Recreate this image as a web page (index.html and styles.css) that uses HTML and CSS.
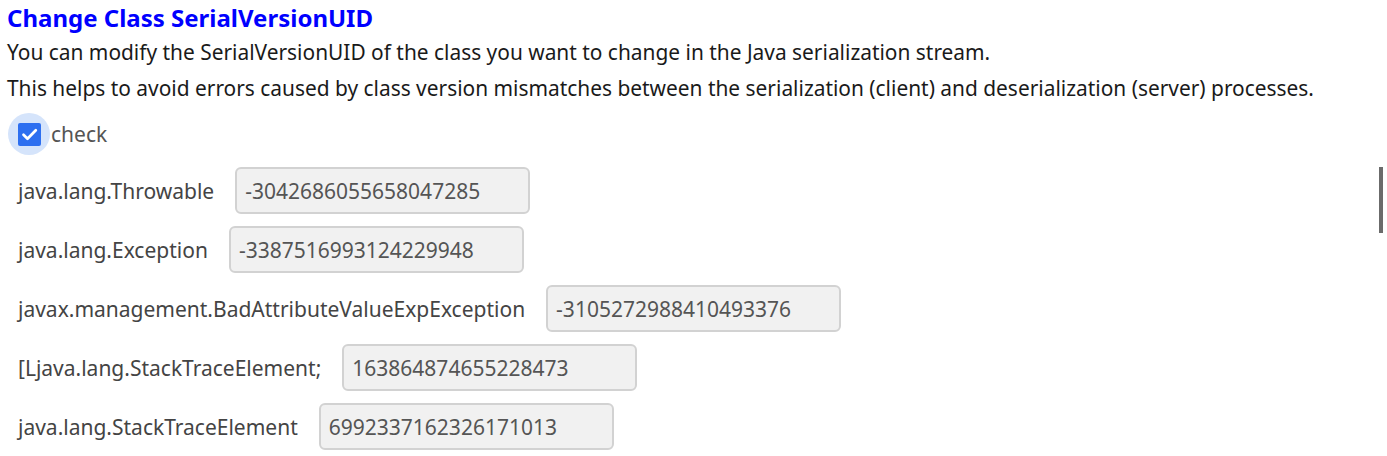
FILE: index.html
```html
<!DOCTYPE html>
<html>
<head>
<meta charset="utf-8">
<link rel="stylesheet" href="styles.css">
</head>
<body>
<div class="page">
  <h2 class="title">Change Class SerialVersionUID</h2>
  <p class="desc">You can modify the SerialVersionUID of the class you want to change in the Java serialization stream.</p>
  <p class="desc">This helps to avoid errors caused by class version mismatches between the serialization (client) and deserialization (server) processes.</p>
  <label class="check">
    <span class="ring"><span class="box"><svg viewBox="0 0 23 23" width="23" height="23"><path d="M5.5 11.8l4 4L17.8 7.2" fill="none" stroke="#fff" stroke-width="2.7" stroke-linecap="round" stroke-linejoin="round"/></svg></span></span>
    <span class="check-label">check</span>
  </label>
  <div class="rows">
    <div class="row"><span class="name">java.lang.Throwable</span><span class="field">-3042686055658047285</span></div>
    <div class="row"><span class="name">java.lang.Exception</span><span class="field">-3387516993124229948</span></div>
    <div class="row"><span class="name">javax.management.BadAttributeValueExpException</span><span class="field">-3105272988410493376</span></div>
    <div class="row"><span class="name">[Ljava.lang.StackTraceElement;</span><span class="field">163864874655228473</span></div>
    <div class="row"><span class="name">java.lang.StackTraceElement</span><span class="field">6992337162326171013</span></div>
  </div>
  <div class="scroll-thumb"></div>
</div>
</body>
</html>
```
FILE: styles.css
```css
html, body {
  margin: 0;
  padding: 0;
  background: #fff;
}
body {
  font-family: "Noto Sans", "Open Sans", sans-serif;
  overflow: hidden;
}
.page {
  padding: 0 7px;
}
.title {
  margin: 0;
  padding-top: 2px;
  font-size: 24px;
  line-height: 32px;
  font-weight: 700;
  color: #0000ff;
}
.desc {
  margin: 0;
  font-size: 20.9px;
  line-height: 36px;
  color: #1a1a1a;
}
.check {
  display: flex;
  align-items: center;
  height: 46px;
  margin-top: 5px;
}
.ring {
  width: 42px;
  height: 42px;
  border-radius: 50%;
  background: #d5e4fb;
  display: flex;
  align-items: center;
  justify-content: center;
  margin-left: 1px;
  margin-right: 1px;
}
.box {
  width: 23px;
  height: 23px;
  border-radius: 2px;
  background: #2d6ff0;
  display: flex;
  align-items: center;
  justify-content: center;
}
.box svg {
  display: block;
}
.check-label {
  font-size: 21px;
  color: #555;
}
.rows {
  display: flex;
  flex-direction: column;
  gap: 12px;
  padding-left: 11px;
  margin-top: 10px;
}
.row {
  display: flex;
  align-items: center;
  height: 47px;
}
.name {
  font-size: 21px;
  color: #444;
  margin-right: 21px;
}
.field {
  box-sizing: border-box;
  width: 295px;
  height: 47px;
  border: 2px solid #d2d2d2;
  border-radius: 6px;
  background: #f1f1f1;
  color: #555;
  font-size: 21px;
  display: flex;
  align-items: center;
  padding-left: 8px;
}
.scroll-thumb {
  position: absolute;
  left: 1379px;
  top: 167px;
  width: 4px;
  height: 66px;
  background: #6b6b6b;
}
```
